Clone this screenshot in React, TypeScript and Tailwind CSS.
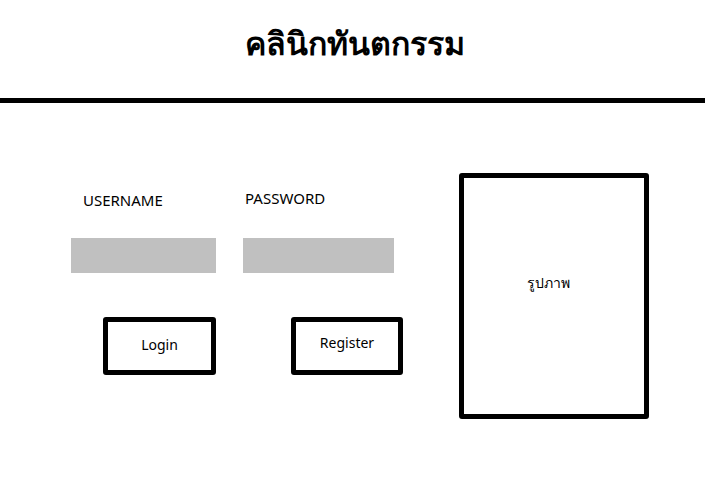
import React from "react";

const App: React.FC = () => {
  return (
    <div className="w-[705px] h-[500px] bg-white text-black font-['Noto_Sans',sans-serif]">
      {/* Header */}
      <header className="h-[98px] flex justify-center pt-[23px]">
        <h1 className="text-[32px] font-bold leading-[40px] pl-[4px]">คลินิกทันตกรรม</h1>
      </header>
      <div className="h-[5px] bg-black" />

      <main className="flex pl-[71px] pt-[70px]">
        {/* Login form */}
        <div className="w-[388px] flex">
          <div className="w-[172px] flex flex-col">
            <div className="h-[65px] pt-[17px] pl-[12px] text-[15px] leading-[20px]">USERNAME</div>
            <div className="w-[145px] h-[35px] bg-[#c0c0c0]" />
            <button
              type="button"
              className="mt-[44px] ml-[32px] w-[113px] h-[58px] border-[5px] border-black rounded-[3px] text-[14px] pb-[3px]"
            >
              Login
            </button>
          </div>
          <div className="w-[151px] flex flex-col">
            <div className="h-[65px] pt-[15px] pl-[2px] text-[15px] leading-[20px]">PASSWORD</div>
            <div className="w-[151px] h-[35px] bg-[#c0c0c0]" />
            <button
              type="button"
              className="mt-[44px] ml-[48px] w-[112px] h-[58px] border-[5px] border-black rounded-[3px] text-[14px] pb-[8px]"
            >
              Register
            </button>
          </div>
        </div>

        {/* Picture placeholder */}
        <div className="w-[190px] h-[246px] border-[5px] border-black rounded-[3px] flex items-center justify-center pr-[12px] pb-[28px] text-[14px]">
          รูปภาพ
        </div>
      </main>
    </div>
  );
};

export default App;
